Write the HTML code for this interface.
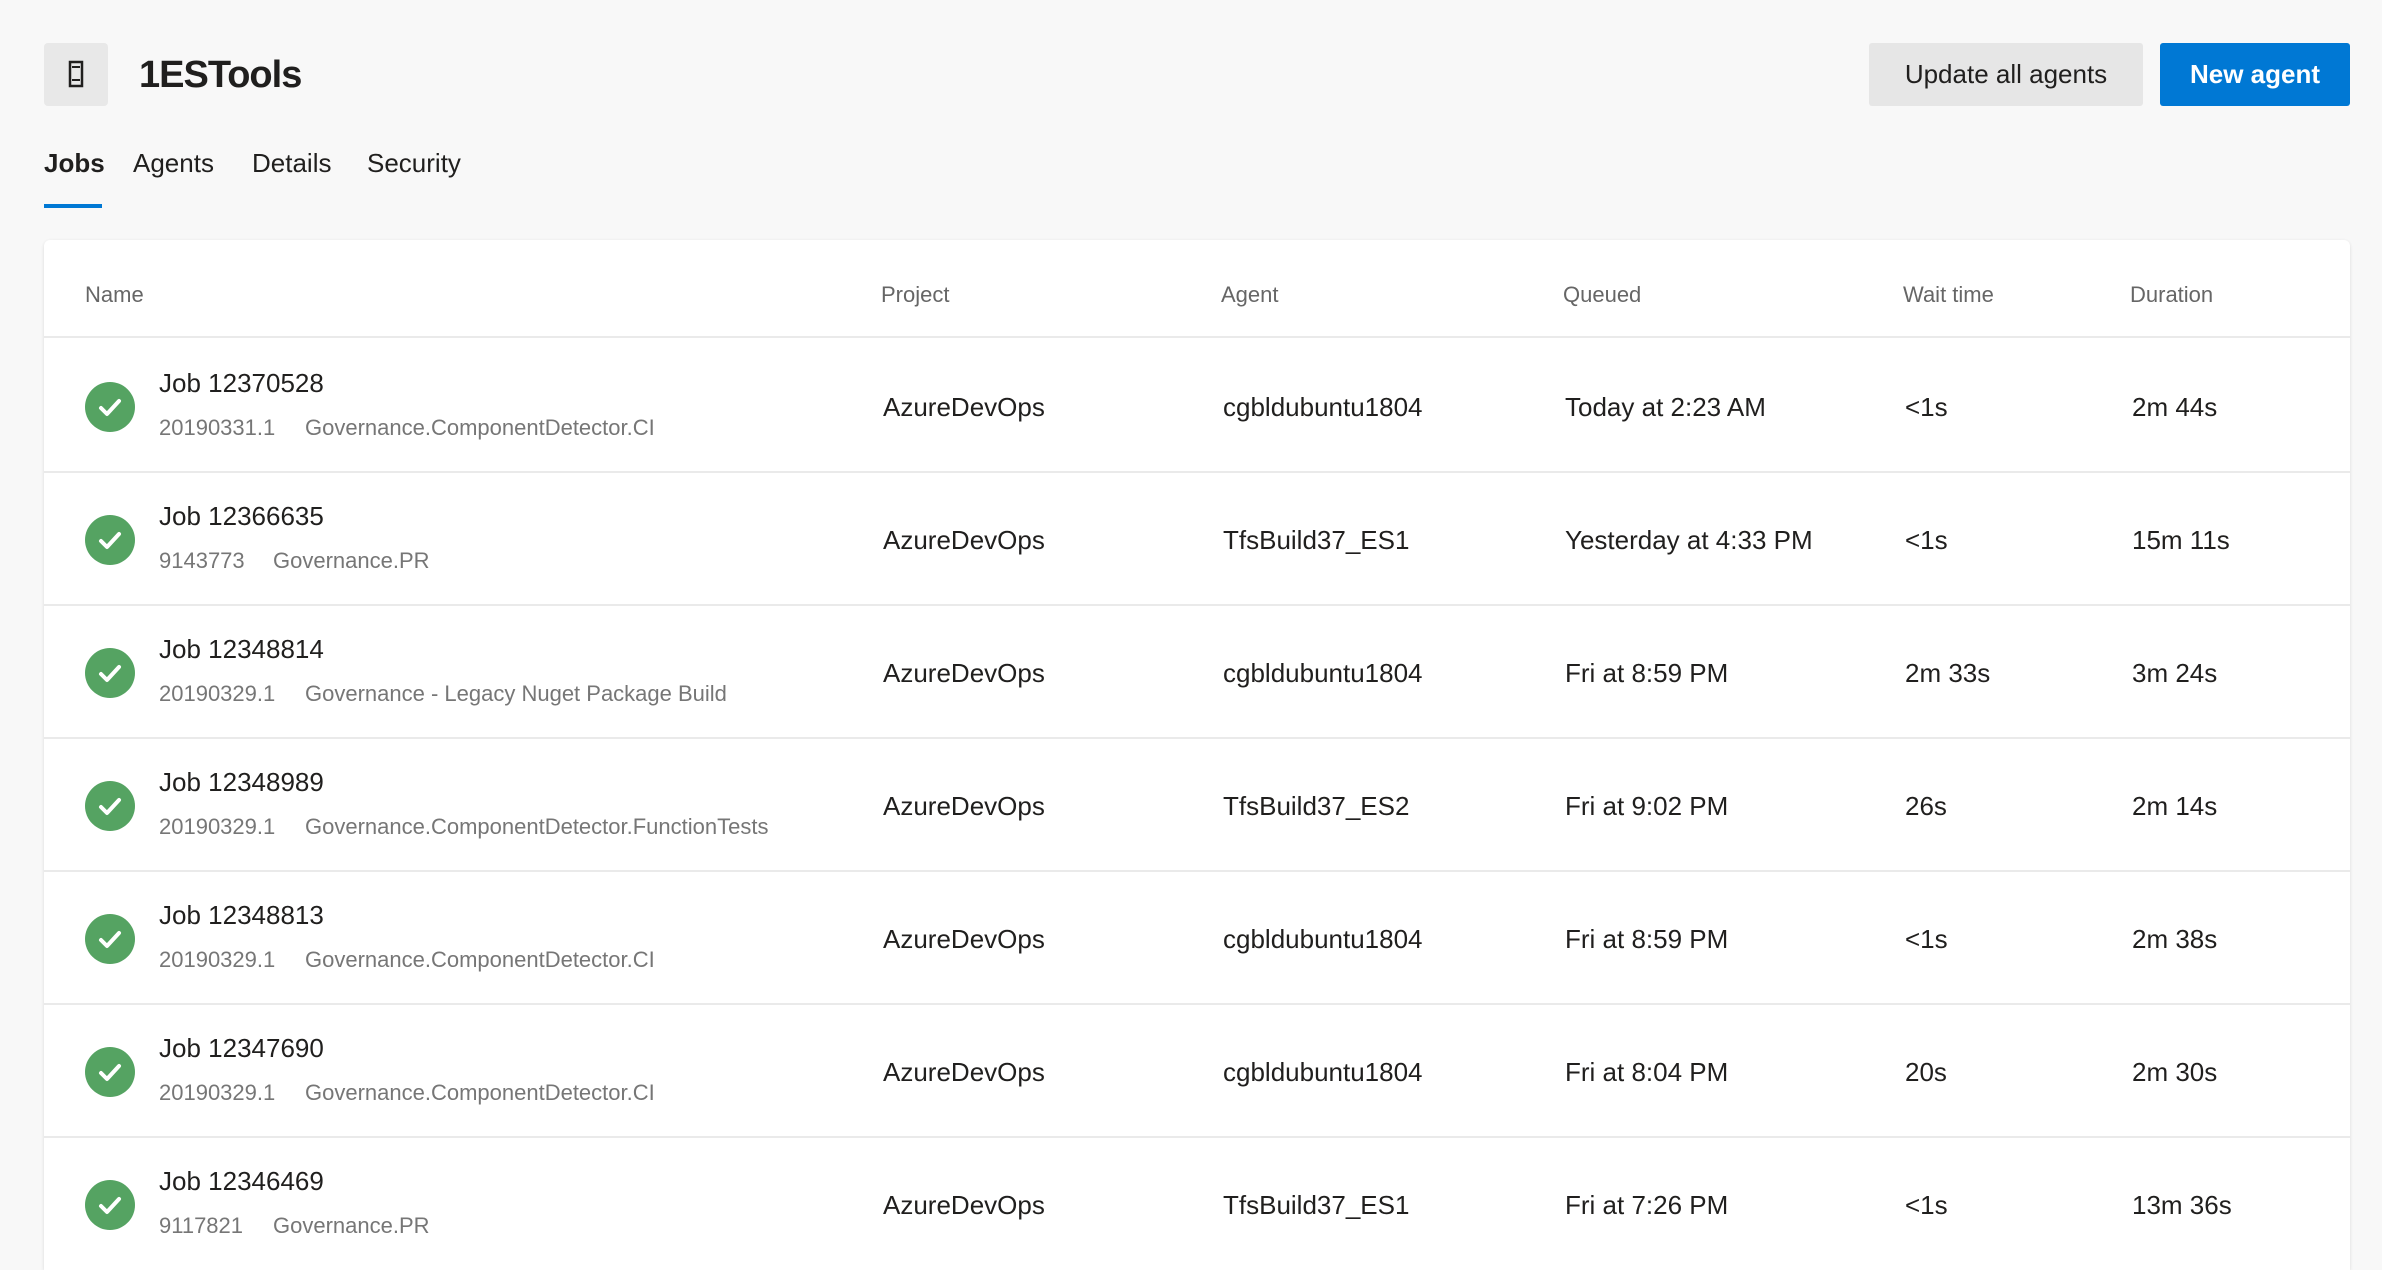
<!DOCTYPE html>
<html style="width:2382px;height:1270px;overflow:hidden"><head><meta charset="utf-8"><style>
*{margin:0;padding:0;box-sizing:border-box}
body{width:2382px;height:1270px;overflow:hidden;background:#f8f8f8;font-family:"Liberation Sans",sans-serif;color:#201f1e;position:relative}
.iconbox{position:absolute;left:44px;top:43px;width:64px;height:63px;background:#e8e8e8;border-radius:4px}
.title{position:absolute;left:139px;top:54px;font-size:38px;font-weight:bold;letter-spacing:-1px}
.tab{position:absolute;top:148px;font-size:26px}
.ul{position:absolute;left:44px;top:204px;width:58px;height:4px;background:#0078d4}
.btn{position:absolute;top:43px;height:63px;border-radius:3px;font-size:26px;display:flex;align-items:center;justify-content:center}
.card{position:absolute;left:44px;top:240px;width:2306px;height:1030px;background:#fff;border-radius:6px 6px 0 0;box-shadow:0 1px 3px rgba(0,0,0,.12)}
.hdr{position:absolute;top:282px;font-size:22px;color:#666}
.line{position:absolute;left:44px;width:2306px;height:2px;background:#eaeaea}
.c{position:absolute;font-size:26px;color:#201f1e}
.jt{position:absolute;left:159px;font-size:26px}
.sub{position:absolute;font-size:22px;color:#767676}
.ok{position:absolute;left:85px;width:50px;height:50px;border-radius:50%;background:#55a362}
</style></head><body>
<div class="iconbox"><svg width="64" height="63" viewBox="0 0 64 63"><rect x="26" y="19" width="12" height="24" fill="none" stroke="#201f1e" stroke-width="2.5"/><line x1="28" y1="24" x2="36" y2="24" stroke="#201f1e" stroke-width="2"/><line x1="28" y1="37" x2="36" y2="37" stroke="#201f1e" stroke-width="2"/></svg></div>
<div class="title">1ESTools</div>
<div class="tab" style="left:44px;font-weight:bold">Jobs</div>
<div class="tab" style="left:133px">Agents</div>
<div class="tab" style="left:252px">Details</div>
<div class="tab" style="left:367px">Security</div>
<div class="ul"></div>
<div class="btn" style="left:1869px;width:274px;background:#e6e6e6">Update all agents</div>
<div class="btn" style="left:2160px;width:190px;background:#0078d4;color:#fff;font-weight:bold">New agent</div>
<div class="card"></div>
<div class="hdr" style="left:85px">Name</div>
<div class="hdr" style="left:881px">Project</div>
<div class="hdr" style="left:1221px">Agent</div>
<div class="hdr" style="left:1563px">Queued</div>
<div class="hdr" style="left:1903px">Wait time</div>
<div class="hdr" style="left:2130px">Duration</div>
<div class="line" style="top:336px"></div>
<div id="rows"></div>
<script>
var d=[["Job 12370528","20190331.1","Governance.ComponentDetector.CI","cgbldubuntu1804","Today at 2:23 AM","<1s","2m 44s"],
["Job 12366635","9143773","Governance.PR","TfsBuild37_ES1","Yesterday at 4:33 PM","<1s","15m 11s"],
["Job 12348814","20190329.1","Governance - Legacy Nuget Package Build","cgbldubuntu1804","Fri at 8:59 PM","2m 33s","3m 24s"],
["Job 12348989","20190329.1","Governance.ComponentDetector.FunctionTests","TfsBuild37_ES2","Fri at 9:02 PM","26s","2m 14s"],
["Job 12348813","20190329.1","Governance.ComponentDetector.CI","cgbldubuntu1804","Fri at 8:59 PM","<1s","2m 38s"],
["Job 12347690","20190329.1","Governance.ComponentDetector.CI","cgbldubuntu1804","Fri at 8:04 PM","20s","2m 30s"],
["Job 12346469","9117821","Governance.PR","TfsBuild37_ES1","Fri at 7:26 PM","<1s","13m 36s"]];
var h="";
d.forEach(function(r,i){var t=337+i*133,m=t+70;
var sx=r[1].length>8?305:273;
h+='<div class="ok" style="top:'+(m-25)+'px"><svg width="50" height="50"><path d="M16 26 L22 32 L34 19" stroke="#fff" stroke-width="4" fill="none" stroke-linecap="round" stroke-linejoin="round"/></svg></div>';
h+='<div class="jt" style="top:'+(m-39)+'px">'+r[0]+'</div>';
h+='<div class="sub" style="left:159px;top:'+(m+8)+'px">'+r[1]+'</div>';
h+='<div class="sub" style="left:'+sx+'px;top:'+(m+8)+'px">'+r[2]+'</div>';
h+='<div class="c" style="left:883px;top:'+(m-15)+'px">AzureDevOps</div>';
h+='<div class="c" style="left:1223px;top:'+(m-15)+'px">'+r[3]+'</div>';
h+='<div class="c" style="left:1565px;top:'+(m-15)+'px">'+r[4]+'</div>';
h+='<div class="c" style="left:1905px;top:'+(m-15)+'px">'+r[5].replace("<","&lt;")+'</div>';
h+='<div class="c" style="left:2132px;top:'+(m-15)+'px">'+r[6]+'</div>';
if(i<6)h+='<div class="line" style="top:'+(t+134)+'px"></div>';});
document.getElementById("rows").innerHTML=h;
</script>
</body></html>
